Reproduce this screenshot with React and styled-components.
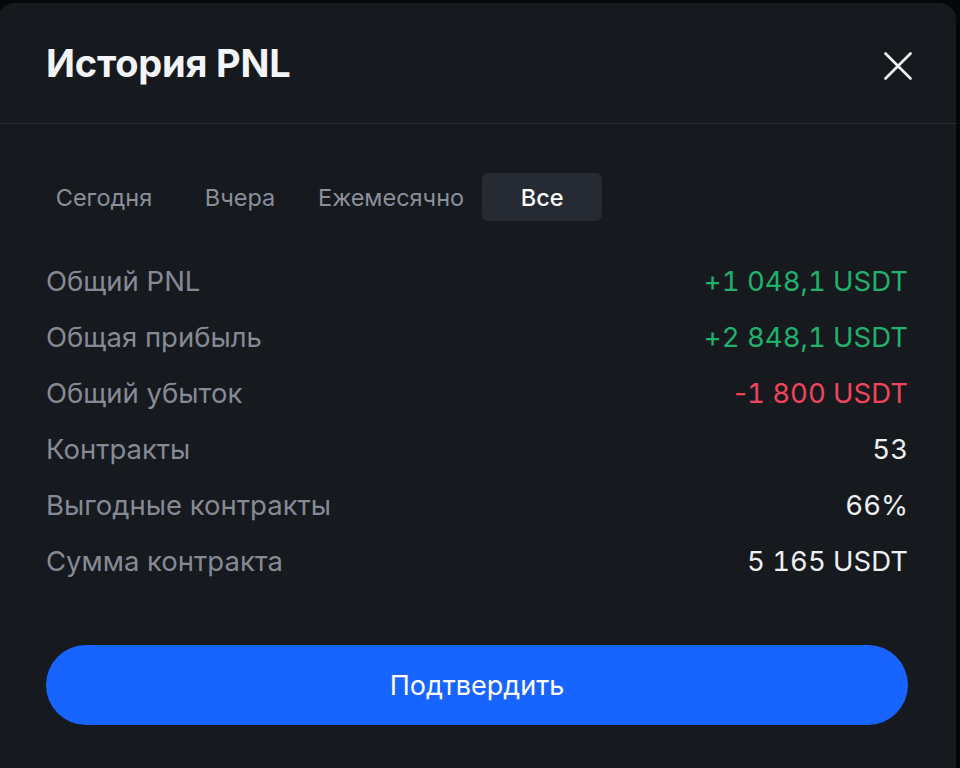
import React from 'react';
import styled, { createGlobalStyle } from 'styled-components';

const GlobalStyle = createGlobalStyle`
  html, body {
    margin: 0;
    padding: 0;
    background: #060708;
    overflow: hidden;
  }
  body {
    font-family: Inter, "Noto Sans", "Liberation Sans", sans-serif;
  }
`;

const Modal = styled.div`
  margin: 3px 0 0 -2px;
  width: 958px;
  height: 800px;
  background: #16191e;
  border-radius: 16px;
  box-sizing: border-box;
`;

const Header = styled.div`
  display: flex;
  align-items: center;
  justify-content: space-between;
  height: 120px;
  padding: 0 42px 0 48px;
  border-bottom: 1px solid #2a2d35;
`;

const Title = styled.h2`
  margin: 0;
  font-size: 38px;
  font-weight: 700;
  color: #f2f4f7;
  letter-spacing: -0.2px;
`;

const CloseBtn = styled.button`
  background: none;
  border: 0;
  padding: 0;
  margin-top: 6px;
  width: 32px;
  height: 32px;
  display: flex;
  align-items: center;
  justify-content: center;
  cursor: pointer;
`;

const Body = styled.div`
  padding: 49px 48px 0 48px;
`;

const Tabs = styled.div`
  display: flex;
  gap: 16px;
  margin-left: -2px;
`;

const Tab = styled.button`
  min-width: 120px;
  height: 48px;
  padding: 0 2px;
  border: 0;
  border-radius: 6px;
  font-family: inherit;
  font-size: 23.5px;
  font-weight: ${p => (p.$active ? 500 : 400)};
  color: ${p => (p.$active ? '#ffffff' : '#8a8f9b')};
  background: ${p => (p.$active ? '#262a32' : 'transparent')};
`;

const Stats = styled.div`
  margin-top: 32px;
  display: flex;
  flex-direction: column;
`;

const Row = styled.div`
  height: 56px;
  display: flex;
  align-items: center;
  justify-content: space-between;
  font-size: 27.5px;
`;

const Label = styled.span`
  color: #858a95;
`;

const Value = styled.span`
  color: ${p => p.$tone === 'up' ? '#20b26c' : p.$tone === 'down' ? '#f0455a' : '#eef0f3'};

  .num {
    font-feature-settings: 'tnum';
  }
`;

const Confirm = styled.button`
  margin-top: 56px;
  width: 100%;
  height: 80px;
  border: 0;
  border-radius: 40px;
  background: #1764ff;
  color: #ffffff;
  font-family: inherit;
  font-size: 27px;
  font-weight: 400;
`;

const tabs = ['Сегодня', 'Вчера', 'Ежемесячно', 'Все'];

const rows = [
  { label: 'Общий PNL', sign: '+', value: '1 048,1 USDT', tone: 'up' },
  { label: 'Общая прибыль', sign: '+', value: '2 848,1 USDT', tone: 'up' },
  { label: 'Общий убыток', sign: '-', value: '1 800 USDT', tone: 'down' },
  { label: 'Контракты', value: '53' },
  { label: 'Выгодные контракты', value: '66%' },
  { label: 'Сумма контракта', value: '5 165 USDT' },
];

export default function App() {
  return (
    <>
      <GlobalStyle />
      <Modal>
        <Header>
          <Title>История PNL</Title>
          <CloseBtn>
            <svg width="28" height="28" viewBox="0 0 28 28">
              <path d="M1.5 1.5L26.5 26.5M26.5 1.5L1.5 26.5" stroke="#f2f4f7" strokeWidth="2.6" strokeLinecap="round" />
            </svg>
          </CloseBtn>
        </Header>
        <Body>
          <Tabs>
            {tabs.map(t => (
              <Tab key={t} $active={t === 'Все'}>{t}</Tab>
            ))}
          </Tabs>
          <Stats>
            {rows.map(r => (
              <Row key={r.label}>
                <Label>{r.label}</Label>
                <Value $tone={r.tone}>
                  {r.sign}
                  <span className="num">{r.value}</span>
                </Value>
              </Row>
            ))}
          </Stats>
          <Confirm>Подтвердить</Confirm>
        </Body>
      </Modal>
    </>
  );
}
